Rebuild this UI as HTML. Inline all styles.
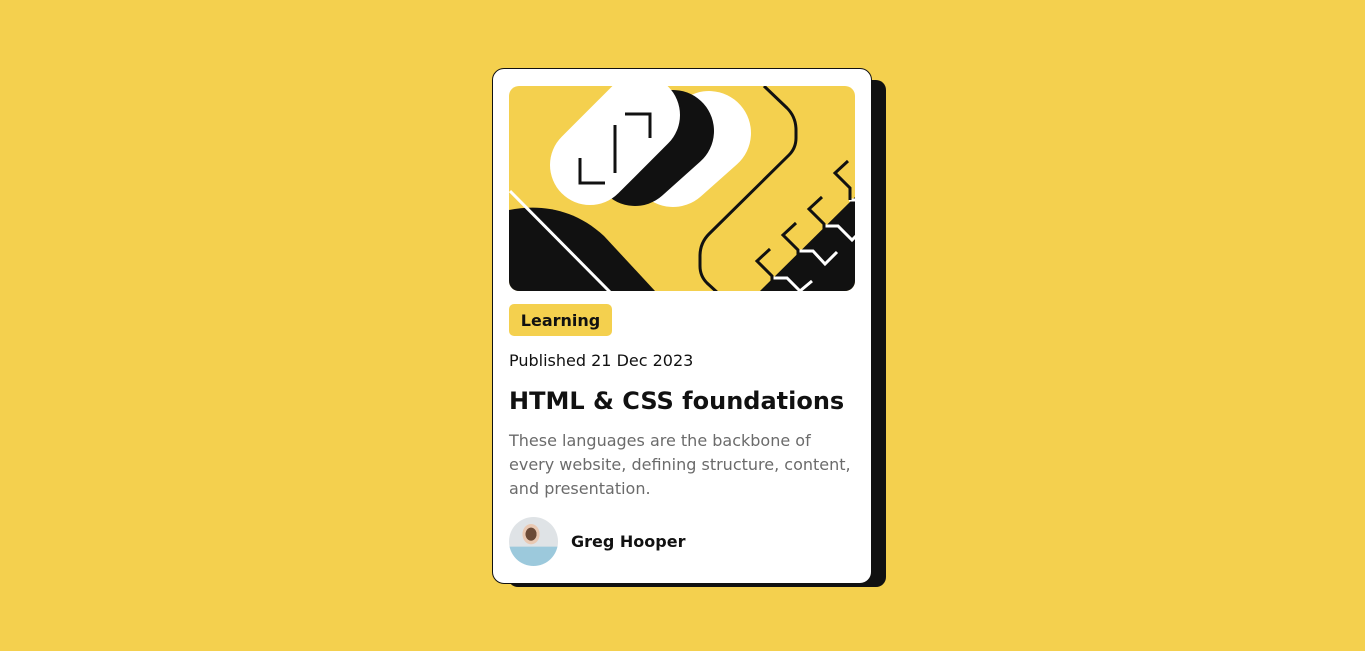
<!DOCTYPE html>
<html><head><meta charset="utf-8"><style>
html,body{margin:0;padding:0;}
body{width:1365px;height:651px;background:#f4d04e;position:relative;overflow:hidden;font-family:"DejaVu Sans","Liberation Sans",sans-serif;color:#111;}
.sh{position:absolute;left:508px;top:80px;width:378px;height:507px;background:#111;border-radius:10px;}
.card{position:absolute;left:492px;top:68px;width:378px;height:514px;background:#fff;border:1px solid #111;border-radius:12px;}
.img{position:absolute;left:509px;top:86px;width:346px;height:205px;border-radius:10px;overflow:hidden;background:#f4d04e;}
.tag{position:absolute;left:509px;top:304px;width:103px;height:32px;background:#f4d04e;border-radius:5px;font-weight:bold;font-size:16px;line-height:33px;text-align:center;}
.pub{position:absolute;left:509px;top:351px;font-size:16px;line-height:20px;}
h1{position:absolute;left:509px;top:385px;margin:0;font-size:24px;line-height:32px;font-weight:bold;white-space:nowrap;}
.desc{position:absolute;left:509px;top:429px;width:350px;font-size:16px;line-height:24px;color:#6b6b6b;margin:0;}
.av{position:absolute;left:509px;top:517px;width:49px;height:49px;border-radius:50%;background:radial-gradient(ellipse at 45% 35%,#6b4a36 0 14%,#e9c9b3 15% 22%,transparent 23%),linear-gradient(#dfe3e6 60%,#9cc9dc 61%);}
.name{position:absolute;left:571px;top:532px;font-size:16px;font-weight:bold;line-height:20px;}
</style></head><body>
<div class="sh"></div>
<div class="card"></div>
<div class="img"><svg width="346" height="205" viewBox="0 0 346 205">
<g stroke-linecap="round">
<line x1="164" y1="79" x2="200" y2="47" stroke="#fff" stroke-width="84"/>
<line x1="126" y1="79" x2="164" y2="45" stroke="#111" stroke-width="82"/>
<line x1="81" y1="79" x2="131" y2="29" stroke="#fff" stroke-width="80"/>
</g>
<g fill="none" stroke="#111" stroke-width="3">
<path d="M116,28 H141 V52"/>
<path d="M106,39 V87"/>
<path d="M71,72 V97 H96"/>
</g>
<path d="M0,124 C30,118 65,122 95,150 L146,205 L0,205 Z" fill="#111"/>
<line x1="1" y1="105" x2="101" y2="206" stroke="#fff" stroke-width="3"/>
<path d="M255,0 L278,22 Q287,31 287,44 L287,52 Q287,62 280,69 L200,148 Q191,157 191,170 L191,180 Q191,190 198,197 L210,208" fill="none" stroke="#111" stroke-width="3"/>
<path d="M251,205 L346,111 L346,205 Z" fill="#111"/>
<g fill="none" stroke="#fff" stroke-width="3">
<path d="M262,192 H278 L291,205 L303,195"/>
<path d="M289,165 H304 L316,178 L328,166"/>
<path d="M315,140 H329 L343,154 L347,150"/>
<path d="M340,114 H347"/>
</g>
<g fill="none" stroke="#111" stroke-width="3">
<path d="M261,163 L248,175 L263,190 L263,202"/>
<path d="M287,137 L274,149 L289,164 L289,176"/>
<path d="M313,111 L300,123 L315,138 L315,150"/>
<path d="M339,75 L326,87 L341,102 L341,114"/>
</g>
</svg></div>
<div class="tag">Learning</div>
<div class="pub">Published 21 Dec 2023</div>
<h1>HTML &amp; CSS foundations</h1>
<p class="desc">These languages are the backbone of<br>every website, defining structure, content,<br>and presentation.</p>
<div class="av"></div>
<div class="name">Greg Hooper</div>
</body></html>
